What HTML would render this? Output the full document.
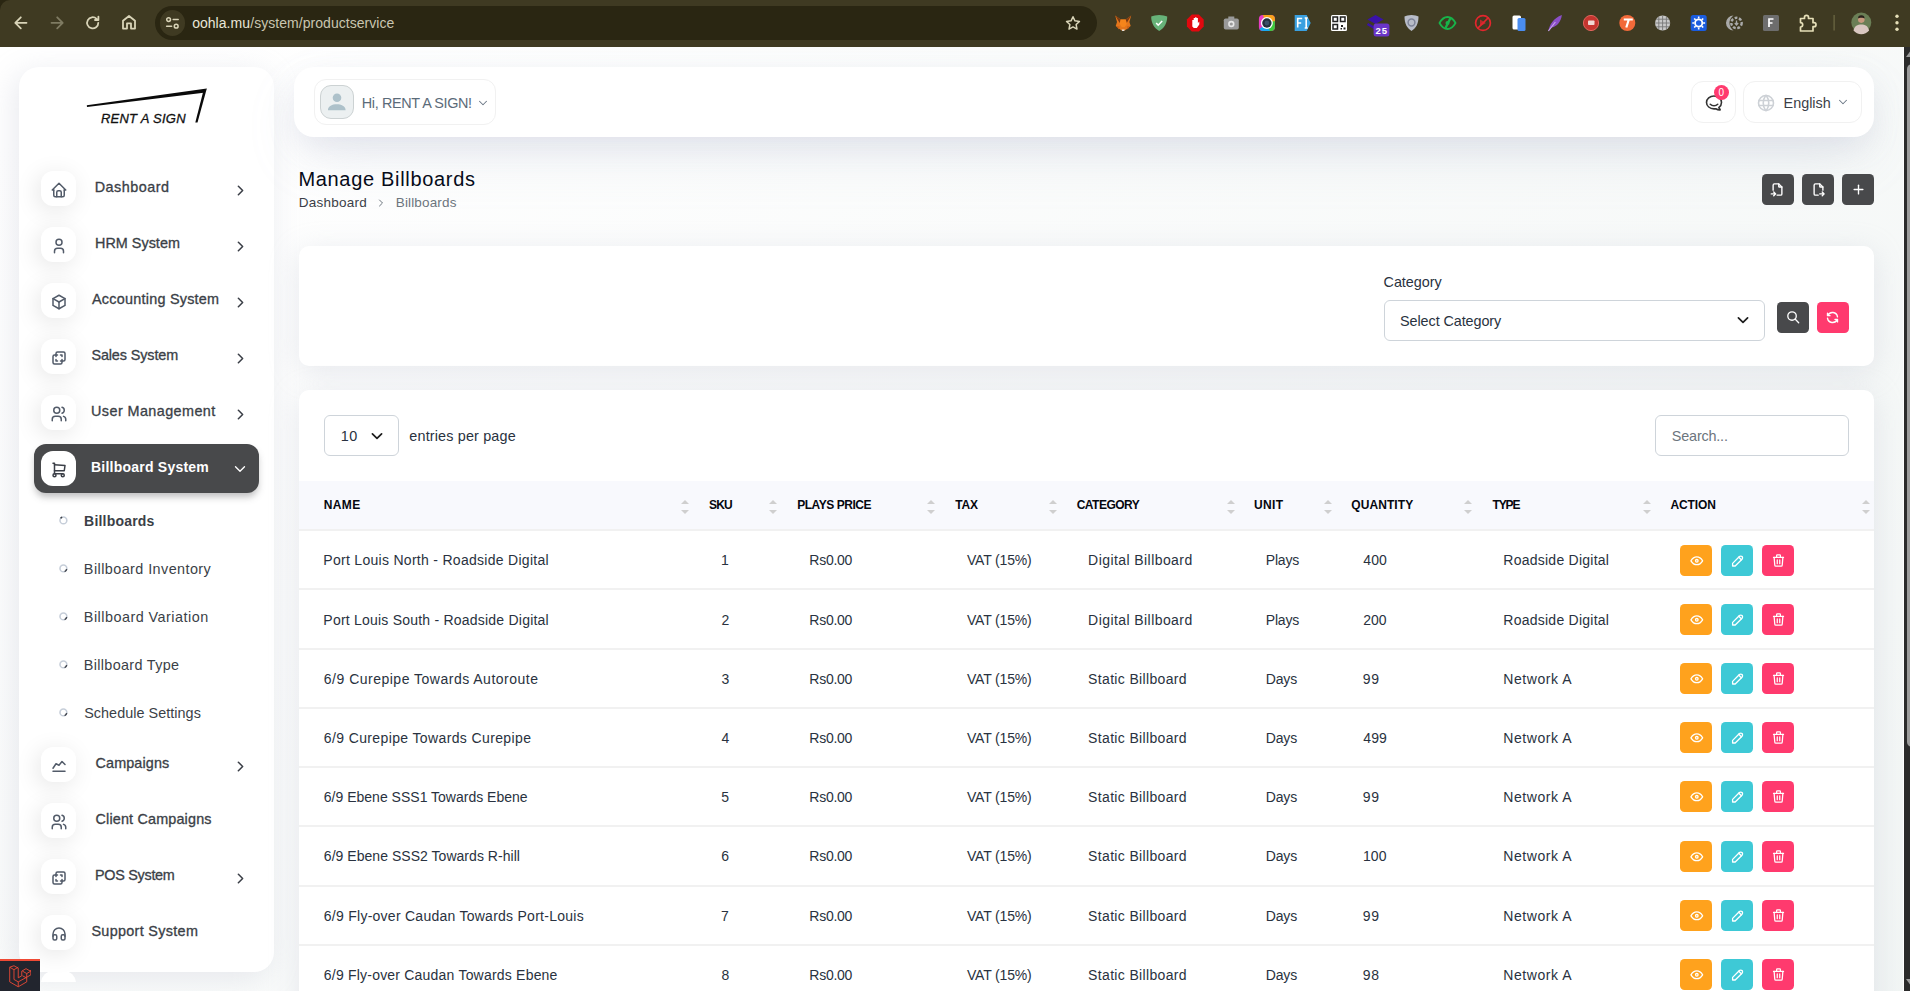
<!DOCTYPE html>
<html lang="en"><head><meta charset="utf-8"><title>Manage Billboards</title><style>
html,body{margin:0;padding:0}
body{width:1910px;height:991px;overflow:hidden;background:#fff;font-family:"Liberation Sans", sans-serif}
#root{position:relative;width:1910px;height:991px;overflow:hidden;background:linear-gradient(141.55deg, rgba(240,244,243,0) 3.46%, #f0f4f3 99.86%) 0 47px/1904px 1260px no-repeat, #fff}
.g{display:contents}
.card{position:absolute;background:#fff}
.ic{position:absolute;display:block}
.ic svg{display:block}
.t{position:absolute;white-space:pre;line-height:20px;font-family:"Liberation Sans", sans-serif}
</style></head>
<body><div id="root">
<nav class="g" aria-label="Sidebar">
<div class="card" style="left:19px;top:67px;width:254.5px;height:904.5px;border-radius:20px;box-shadow:-5px 6px 30px rgba(182,186,203,.3)"></div>
<div style="position:absolute;left:41px;top:971px;width:35px;height:11px;overflow:hidden"><div style="width:35px;height:35px;border-radius:12px;background:#fff"></div></div>
<svg class="ic" style="left:80px;top:80px" width="140" height="50" viewBox="80 80 140 50"><polygon points="86.8,105.3 206.8,88.4 203.6,92.7 87,106.9" fill="#0a0a0a"/><polygon points="206.8,88.4 197.5,122.5 195.3,122.5 203.1,92.0" fill="#0a0a0a"/></svg>
<div style="position:absolute;left:34px;top:444px;width:225px;height:49px;border-radius:12px;background:#48494b;box-shadow:0 5px 7px -1px rgba(72,73,75,.35)"></div>
<div style="position:absolute;left:41px;top:171px;width:35px;height:35px;border-radius:12px;background:#fff;box-shadow:-3px 4px 23px rgba(0,0,0,.1);"></div>
<div class="ic" style="left:49.70px;top:180.60px;width:18px;height:18px"><svg width="18" height="18" viewBox="0 0 24 24" fill="none" stroke="#525b69" stroke-width="2" stroke-linecap="round" stroke-linejoin="round" ><path d="M5 12l-2 0l9 -9l9 9l-2 0"/><path d="M5 12v7a2 2 0 0 0 2 2h10a2 2 0 0 0 2 -2v-7"/><path d="M9 21v-6a2 2 0 0 1 2 -2h2a2 2 0 0 1 2 2v6"/></svg></div>
<div class="ic" style="left:232.40px;top:181.50px;width:17px;height:17px"><svg width="17" height="17" viewBox="0 0 24 24" fill="none" stroke="#3b3f47" stroke-width="2.2" stroke-linecap="round" stroke-linejoin="round" ><path d="M9 6l6 6l-6 6"/></svg></div>
<div style="position:absolute;left:41px;top:227px;width:35px;height:35px;border-radius:12px;background:#fff;box-shadow:-3px 4px 23px rgba(0,0,0,.1);"></div>
<div class="ic" style="left:49.70px;top:236.60px;width:18px;height:18px"><svg width="18" height="18" viewBox="0 0 24 24" fill="none" stroke="#525b69" stroke-width="2" stroke-linecap="round" stroke-linejoin="round" ><path d="M8 7a4 4 0 1 0 8 0a4 4 0 0 0 -8 0"/><path d="M6 21v-2a4 4 0 0 1 4 -4h4a4 4 0 0 1 4 4v2"/></svg></div>
<div class="ic" style="left:232.40px;top:237.50px;width:17px;height:17px"><svg width="17" height="17" viewBox="0 0 24 24" fill="none" stroke="#3b3f47" stroke-width="2.2" stroke-linecap="round" stroke-linejoin="round" ><path d="M9 6l6 6l-6 6"/></svg></div>
<div style="position:absolute;left:41px;top:283px;width:35px;height:35px;border-radius:12px;background:#fff;box-shadow:-3px 4px 23px rgba(0,0,0,.1);"></div>
<div class="ic" style="left:49.70px;top:292.60px;width:18px;height:18px"><svg width="18" height="18" viewBox="0 0 24 24" fill="none" stroke="#525b69" stroke-width="2" stroke-linecap="round" stroke-linejoin="round" ><path d="M12 3l8 4.5l0 9l-8 4.5l-8 -4.5l0 -9l8 -4.5"/><path d="M12 12l8 -4.5"/><path d="M12 12l0 9"/><path d="M12 12l-8 -4.5"/></svg></div>
<div class="ic" style="left:232.40px;top:293.50px;width:17px;height:17px"><svg width="17" height="17" viewBox="0 0 24 24" fill="none" stroke="#3b3f47" stroke-width="2.2" stroke-linecap="round" stroke-linejoin="round" ><path d="M9 6l6 6l-6 6"/></svg></div>
<div style="position:absolute;left:41px;top:339px;width:35px;height:35px;border-radius:12px;background:#fff;box-shadow:-3px 4px 23px rgba(0,0,0,.1);"></div>
<div class="ic" style="left:49.70px;top:348.60px;width:18px;height:18px"><svg width="18" height="18" viewBox="0 0 24 24" fill="none" stroke="#525b69" stroke-width="2" stroke-linecap="round" stroke-linejoin="round" ><path d="M16 16v2a2 2 0 0 1 -2 2h-8a2 2 0 0 1 -2 -2v-8a2 2 0 0 1 2 -2h2v-2a2 2 0 0 1 2 -2h8a2 2 0 0 1 2 2v8a2 2 0 0 1 -2 2h-2"/><path d="M10 8l-2 0l0 2"/><path d="M8 14l0 2l2 0"/><path d="M14 8l2 0l0 2"/><path d="M16 14l0 2l-2 0"/></svg></div>
<div class="ic" style="left:232.40px;top:349.50px;width:17px;height:17px"><svg width="17" height="17" viewBox="0 0 24 24" fill="none" stroke="#3b3f47" stroke-width="2.2" stroke-linecap="round" stroke-linejoin="round" ><path d="M9 6l6 6l-6 6"/></svg></div>
<div style="position:absolute;left:41px;top:395px;width:35px;height:35px;border-radius:12px;background:#fff;box-shadow:-3px 4px 23px rgba(0,0,0,.1);"></div>
<div class="ic" style="left:49.70px;top:404.60px;width:18px;height:18px"><svg width="18" height="18" viewBox="0 0 24 24" fill="none" stroke="#525b69" stroke-width="2" stroke-linecap="round" stroke-linejoin="round" ><path d="M5 7a4 4 0 1 0 8 0a4 4 0 1 0 -8 0"/><path d="M3 21v-2a4 4 0 0 1 4 -4h4a4 4 0 0 1 4 4v2"/><path d="M16 3.13a4 4 0 0 1 0 7.75"/><path d="M21 21v-2a4 4 0 0 0 -3 -3.85"/></svg></div>
<div class="ic" style="left:232.40px;top:405.50px;width:17px;height:17px"><svg width="17" height="17" viewBox="0 0 24 24" fill="none" stroke="#3b3f47" stroke-width="2.2" stroke-linecap="round" stroke-linejoin="round" ><path d="M9 6l6 6l-6 6"/></svg></div>
<div style="position:absolute;left:41px;top:451px;width:35px;height:35px;border-radius:12px;background:#fff;"></div>
<div class="ic" style="left:49.70px;top:460.60px;width:18px;height:18px"><svg width="18" height="18" viewBox="0 0 24 24" fill="none" stroke="#3b3f47" stroke-width="2" stroke-linecap="round" stroke-linejoin="round" ><path d="M4 19a2 2 0 1 0 4 0a2 2 0 1 0 -4 0"/><path d="M15 19a2 2 0 1 0 4 0a2 2 0 1 0 -4 0"/><path d="M17 17h-11v-14h-2"/><path d="M6 5l14 1l-1 7h-13"/></svg></div>
<div style="position:absolute;left:41px;top:747px;width:35px;height:35px;border-radius:12px;background:#fff;box-shadow:-3px 4px 23px rgba(0,0,0,.1);"></div>
<div class="ic" style="left:49.70px;top:756.60px;width:18px;height:18px"><svg width="18" height="18" viewBox="0 0 24 24" fill="none" stroke="#525b69" stroke-width="2" stroke-linecap="round" stroke-linejoin="round" ><path d="M4 19l16 0"/><path d="M4 15l4 -6l4 2l4 -5l4 4"/></svg></div>
<div class="ic" style="left:232.40px;top:757.50px;width:17px;height:17px"><svg width="17" height="17" viewBox="0 0 24 24" fill="none" stroke="#3b3f47" stroke-width="2.2" stroke-linecap="round" stroke-linejoin="round" ><path d="M9 6l6 6l-6 6"/></svg></div>
<div style="position:absolute;left:41px;top:803px;width:35px;height:35px;border-radius:12px;background:#fff;box-shadow:-3px 4px 23px rgba(0,0,0,.1);"></div>
<div class="ic" style="left:49.70px;top:812.60px;width:18px;height:18px"><svg width="18" height="18" viewBox="0 0 24 24" fill="none" stroke="#525b69" stroke-width="2" stroke-linecap="round" stroke-linejoin="round" ><path d="M5 7a4 4 0 1 0 8 0a4 4 0 1 0 -8 0"/><path d="M3 21v-2a4 4 0 0 1 4 -4h4a4 4 0 0 1 4 4v2"/><path d="M16 3.13a4 4 0 0 1 0 7.75"/><path d="M21 21v-2a4 4 0 0 0 -3 -3.85"/></svg></div>
<div style="position:absolute;left:41px;top:859px;width:35px;height:35px;border-radius:12px;background:#fff;box-shadow:-3px 4px 23px rgba(0,0,0,.1);"></div>
<div class="ic" style="left:49.70px;top:868.60px;width:18px;height:18px"><svg width="18" height="18" viewBox="0 0 24 24" fill="none" stroke="#525b69" stroke-width="2" stroke-linecap="round" stroke-linejoin="round" ><path d="M16 16v2a2 2 0 0 1 -2 2h-8a2 2 0 0 1 -2 -2v-8a2 2 0 0 1 2 -2h2v-2a2 2 0 0 1 2 -2h8a2 2 0 0 1 2 2v8a2 2 0 0 1 -2 2h-2"/><path d="M10 8l-2 0l0 2"/><path d="M8 14l0 2l2 0"/><path d="M14 8l2 0l0 2"/><path d="M16 14l0 2l-2 0"/></svg></div>
<div class="ic" style="left:232.40px;top:869.50px;width:17px;height:17px"><svg width="17" height="17" viewBox="0 0 24 24" fill="none" stroke="#3b3f47" stroke-width="2.2" stroke-linecap="round" stroke-linejoin="round" ><path d="M9 6l6 6l-6 6"/></svg></div>
<div style="position:absolute;left:41px;top:915px;width:35px;height:35px;border-radius:12px;background:#fff;box-shadow:-3px 4px 23px rgba(0,0,0,.1);"></div>
<div class="ic" style="left:49.70px;top:924.60px;width:18px;height:18px"><svg width="18" height="18" viewBox="0 0 24 24" fill="none" stroke="#525b69" stroke-width="2" stroke-linecap="round" stroke-linejoin="round" ><path d="M4 15a2 2 0 0 1 2 -2h1a2 2 0 0 1 2 2v3a2 2 0 0 1 -2 2h-1a2 2 0 0 1 -2 -2z"/><path d="M15 15a2 2 0 0 1 2 -2h1a2 2 0 0 1 2 2v3a2 2 0 0 1 -2 2h-1a2 2 0 0 1 -2 -2z"/><path d="M4 15v-3a8 8 0 0 1 16 0v3"/></svg></div>
<div class="ic" style="left:230.50px;top:459.50px;width:18px;height:18px"><svg width="18" height="18" viewBox="0 0 24 24" fill="none" stroke="#ffffff" stroke-width="1.8" stroke-linecap="round" stroke-linejoin="round" ><path d="M6 9l6 6l6 -6"/></svg></div>
<svg class="ic" style="left:57.6px;top:514.8px" width="11" height="11" viewBox="0 0 11 11"><circle cx="5.4" cy="5.4" r="3.4" fill="none" stroke="#c6ced9" stroke-width="1.6"/><path d="M2.6 3.4A3.4 3.4 0 0 1 4.2 2.2" fill="none" stroke="#3b3f47" stroke-width="1.5"/></svg>
<svg class="ic" style="left:57.6px;top:563.2px" width="11" height="11" viewBox="0 0 11 11"><circle cx="5.4" cy="5.4" r="3.4" fill="none" stroke="#c6ced9" stroke-width="1.6"/><path d="M8.7 6.2A3.4 3.4 0 0 1 6.6 8.6" fill="none" stroke="#3b3f47" stroke-width="1.5"/></svg>
<svg class="ic" style="left:57.6px;top:611.2px" width="11" height="11" viewBox="0 0 11 11"><circle cx="5.4" cy="5.4" r="3.4" fill="none" stroke="#c6ced9" stroke-width="1.6"/><path d="M8.7 6.2A3.4 3.4 0 0 1 6.6 8.6" fill="none" stroke="#3b3f47" stroke-width="1.5"/></svg>
<svg class="ic" style="left:57.6px;top:659.2px" width="11" height="11" viewBox="0 0 11 11"><circle cx="5.4" cy="5.4" r="3.4" fill="none" stroke="#c6ced9" stroke-width="1.6"/><path d="M8.7 6.2A3.4 3.4 0 0 1 6.6 8.6" fill="none" stroke="#3b3f47" stroke-width="1.5"/></svg>
<svg class="ic" style="left:57.6px;top:707.2px" width="11" height="11" viewBox="0 0 11 11"><circle cx="5.4" cy="5.4" r="3.4" fill="none" stroke="#c6ced9" stroke-width="1.6"/><path d="M8.7 6.2A3.4 3.4 0 0 1 6.6 8.6" fill="none" stroke="#3b3f47" stroke-width="1.5"/></svg>
<span class="t" id="t2" style="left:100.93px;top:109.00px;font-size:13px;font-weight:400;color:#111;letter-spacing:0.250px;font-style:italic;-webkit-text-stroke:0.3px #111;">RENT A SIGN</span>
<span class="t" id="t3" style="left:94.64px;top:177.00px;font-size:14.4px;font-weight:400;color:#3b3f47;letter-spacing:0.509px;-webkit-text-stroke:0.32px #3b3f47;">Dashboard</span>
<span class="t" id="t4" style="left:95.04px;top:233.00px;font-size:14.4px;font-weight:400;color:#3b3f47;letter-spacing:0.011px;-webkit-text-stroke:0.32px #3b3f47;">HRM System</span>
<span class="t" id="t5" style="left:92.02px;top:289.00px;font-size:14.4px;font-weight:400;color:#3b3f47;letter-spacing:0.242px;-webkit-text-stroke:0.32px #3b3f47;">Accounting System</span>
<span class="t" id="t6" style="left:91.40px;top:345.00px;font-size:14.4px;font-weight:400;color:#3b3f47;letter-spacing:-0.111px;-webkit-text-stroke:0.32px #3b3f47;">Sales System</span>
<span class="t" id="t7" style="left:91.05px;top:401.00px;font-size:14.4px;font-weight:400;color:#3b3f47;letter-spacing:0.418px;-webkit-text-stroke:0.32px #3b3f47;">User Management</span>
<span class="t" id="t8" style="left:90.92px;top:457.00px;font-size:14px;font-weight:700;color:#ffffff;letter-spacing:0.236px;">Billboard System</span>
<span class="t" id="t9" style="left:84.12px;top:511.00px;font-size:14px;font-weight:700;color:#3b3f47;letter-spacing:0.196px;">Billboards</span>
<span class="t" id="t10" style="left:83.86px;top:559.00px;font-size:14.4px;font-weight:400;color:#3b3f47;letter-spacing:0.429px;">Billboard Inventory</span>
<span class="t" id="t11" style="left:83.86px;top:607.00px;font-size:14.4px;font-weight:400;color:#3b3f47;letter-spacing:0.476px;">Billboard Variation</span>
<span class="t" id="t12" style="left:83.86px;top:655.00px;font-size:14.4px;font-weight:400;color:#3b3f47;letter-spacing:0.324px;">Billboard Type</span>
<span class="t" id="t13" style="left:84.17px;top:703.00px;font-size:14.4px;font-weight:400;color:#3b3f47;letter-spacing:0.043px;">Schedule Settings</span>
<span class="t" id="t14" style="left:95.50px;top:753.00px;font-size:14.4px;font-weight:400;color:#3b3f47;letter-spacing:0.121px;-webkit-text-stroke:0.32px #3b3f47;">Campaigns</span>
<span class="t" id="t15" style="left:95.50px;top:809.00px;font-size:14.4px;font-weight:400;color:#3b3f47;letter-spacing:0.161px;-webkit-text-stroke:0.32px #3b3f47;">Client Campaigns</span>
<span class="t" id="t16" style="left:95.04px;top:865.00px;font-size:14.4px;font-weight:400;color:#3b3f47;letter-spacing:-0.287px;-webkit-text-stroke:0.32px #3b3f47;">POS System</span>
<span class="t" id="t17" style="left:91.40px;top:921.00px;font-size:14.4px;font-weight:400;color:#3b3f47;letter-spacing:0.317px;-webkit-text-stroke:0.32px #3b3f47;">Support System</span>
</nav>
<header class="g">
<div class="card" style="left:294px;top:67px;width:1580px;height:70px;border-radius:20px;box-shadow:0 10px 30px -4px rgba(165,170,195,.22),0 24px 60px -12px rgba(165,170,195,.24)"></div>
<div style="position:absolute;left:314px;top:79px;width:182px;height:46px;border:1px solid #f1f1f1;border-radius:12px;box-sizing:border-box"></div>
<div style="position:absolute;left:320px;top:85px;width:34px;height:34px;border-radius:11px;background:#ecf0f1;border:1.2px solid #ccd2d3;box-sizing:border-box;overflow:hidden"><svg width="34" height="34" viewBox="0 0 34 34" style="position:absolute;left:-1.2px;top:-1.2px"><circle cx="17" cy="12.7" r="4.3" fill="#adc1ca"/><path d="M7.9 25.3c0-4.4 4.5-6.1 8.85-6.1s8.85 1.7 8.85 6.1z" fill="#adc1ca"/></svg></div>
<div class="ic" style="left:476.20px;top:95.60px;width:14px;height:14px"><svg width="14" height="14" viewBox="0 0 24 24" fill="none" stroke="#6b7785" stroke-width="1.8" stroke-linecap="round" stroke-linejoin="round" ><path d="M6 9l6 6l6 -6"/></svg></div>
<div style="position:absolute;left:1691px;top:81px;width:45px;height:42px;border:1px solid #f1f1f1;border-radius:12px;box-sizing:border-box"></div>
<div class="ic" style="left:1703.50px;top:93.00px;width:20px;height:20px"><svg width="20" height="20" viewBox="0 0 24 24" fill="none" stroke="#333" stroke-width="1.9" stroke-linecap="round" stroke-linejoin="round" ><path d="M17.802 17.292s.077 -.055 .2 -.149c1.843 -1.425 3 -3.49 3 -5.789c0 -4.286 -4.03 -7.764 -9 -7.764c-4.97 0 -9 3.478 -9 7.764c0 4.288 4.03 7.646 9 7.646c.424 0 1.12 -.028 2.088 -.084c1.262 .82 3.104 1.493 4.716 1.493c.499 0 .734 -.41 .414 -.828c-.486 -.596 -1.156 -1.551 -1.416 -2.29z"/><path d="M7.5 13.5c2.5 2.5 6.5 2.5 9 0"/></svg></div>
<div style="position:absolute;left:1714px;top:84.8px;width:15px;height:15px;border-radius:50%;background:#ff3a6e"></div>
<div style="position:absolute;left:1743px;top:81px;width:119px;height:42px;border:1px solid #f1f1f1;border-radius:12px;box-sizing:border-box"></div>
<div class="ic" style="left:1755.50px;top:92.90px;width:20px;height:20px"><svg width="20" height="20" viewBox="0 0 24 24" fill="none" stroke="#cdd1d6" stroke-width="1.9" stroke-linecap="round" stroke-linejoin="round" ><path d="M3 12a9 9 0 1 0 18 0a9 9 0 0 0 -18 0"/><path d="M3.6 9h16.8"/><path d="M3.6 15h16.8"/><path d="M11.5 3a17 17 0 0 0 0 18"/><path d="M12.5 3a17 17 0 0 1 0 18"/></svg></div>
<div class="ic" style="left:1836.00px;top:95.20px;width:14px;height:14px"><svg width="14" height="14" viewBox="0 0 24 24" fill="none" stroke="#6b7785" stroke-width="1.8" stroke-linecap="round" stroke-linejoin="round" ><path d="M6 9l6 6l6 -6"/></svg></div>
<span class="t" id="t18" style="left:361.78px;top:93.00px;font-size:14.4px;font-weight:400;color:#5b6b79;letter-spacing:-0.359px;">Hi, RENT A SIGN!</span>
<span class="t" id="t19" style="left:1783.54px;top:93.00px;font-size:14.4px;font-weight:400;color:#3b3f47;letter-spacing:0.007px;">English</span>
<span class="t" id="t20" style="left:1718.38px;top:83.00px;font-size:10px;font-weight:400;color:#ffffff;letter-spacing:0.000px;">0</span>
</header>
<main class="g">
<div style="position:absolute;left:1762px;top:174px;width:32px;height:31px;border-radius:4.5px;background:#48494b"></div>
<div class="ic" style="left:1770.40px;top:181.50px;width:15px;height:15px"><svg width="15" height="15" viewBox="0 0 24 24" fill="none" stroke="#ffffff" stroke-width="2.2" stroke-linecap="round" stroke-linejoin="round" ><path d="M14 3v4a1 1 0 0 0 1 1h4"/><path d="M5 13v-8a2 2 0 0 1 2 -2h7l5 5v11a2 2 0 0 1 -2 2h-5.5m-9.5 -2h7m-3 -3l3 3l-3 3"/></svg></div>
<div style="position:absolute;left:1802px;top:174px;width:32px;height:31px;border-radius:4.5px;background:#48494b"></div>
<div class="ic" style="left:1810.80px;top:181.50px;width:15px;height:15px"><svg width="15" height="15" viewBox="0 0 24 24" fill="none" stroke="#ffffff" stroke-width="2.2" stroke-linecap="round" stroke-linejoin="round" ><path d="M14 3v4a1 1 0 0 0 1 1h4"/><path d="M11.5 21h-4.5a2 2 0 0 1 -2 -2v-14a2 2 0 0 1 2 -2h7l5 5v5m-5 6h7m-3 -3l3 3l-3 3"/></svg></div>
<div style="position:absolute;left:1842px;top:174px;width:32px;height:31px;border-radius:4.5px;background:#48494b"></div>
<div class="ic" style="left:1850.50px;top:181.50px;width:15px;height:15px"><svg width="15" height="15" viewBox="0 0 24 24" fill="none" stroke="#ffffff" stroke-width="2.2" stroke-linecap="round" stroke-linejoin="round" ><path d="M12 5l0 14"/><path d="M5 12l14 0"/></svg></div>
<div class="ic" style="left:374.70px;top:196.60px;width:12px;height:12px"><svg width="12" height="12" viewBox="0 0 24 24" fill="none" stroke="#6c757d" stroke-width="2" stroke-linecap="round" stroke-linejoin="round" ><path d="M9 6l6 6l-6 6"/></svg></div>
<div class="card" style="left:299px;top:246px;width:1575px;height:120px;border-radius:10px;box-shadow:0 6px 30px rgba(182,186,203,.3)"></div>
<div style="position:absolute;left:1384px;top:300px;width:381px;height:40.5px;border:1px solid #ced4da;border-radius:6px;box-sizing:border-box;background:#fff"></div>
<svg class="ic" style="left:1736px;top:314px" width="14" height="12" viewBox="0 0 14 12"><path d="M2.4 3.8l4.6 4.6l4.6 -4.6" fill="none" stroke="#1d1d1d" stroke-width="1.7" stroke-linecap="round" stroke-linejoin="round"/></svg>
<div style="position:absolute;left:1777px;top:302px;width:32px;height:31px;border-radius:4.5px;background:#48494b"></div>
<div class="ic" style="left:1785.85px;top:309.95px;width:14.5px;height:14.5px"><svg width="14.5" height="14.5" viewBox="0 0 24 24" fill="none" stroke="#ffffff" stroke-width="2.2" stroke-linecap="round" stroke-linejoin="round" ><path d="M3 10a7 7 0 1 0 14 0a7 7 0 1 0 -14 0"/><path d="M21 21l-6 -6"/></svg></div>
<div style="position:absolute;left:1817px;top:302px;width:32px;height:31px;border-radius:4.5px;background:#ff3a6e"></div>
<div class="ic" style="left:1825.30px;top:310.00px;width:15px;height:15px"><svg width="15" height="15" viewBox="0 0 24 24" fill="none" stroke="#ffffff" stroke-width="2.2" stroke-linecap="round" stroke-linejoin="round" ><path d="M20 11a8.1 8.1 0 0 0 -15.5 -2m-.5 -4v4h4"/><path d="M4 13a8.1 8.1 0 0 0 15.5 2m.5 4v-4h-4"/></svg></div>
<div class="card" style="left:299px;top:390px;width:1575px;height:700px;border-radius:10px;box-shadow:0 6px 30px rgba(182,186,203,.3)"></div>
<div style="position:absolute;left:324px;top:415px;width:75px;height:40.5px;border:1px solid #ced4da;border-radius:6px;box-sizing:border-box;background:#fff"></div>
<svg class="ic" style="left:370px;top:429.8px" width="14" height="12" viewBox="0 0 14 12"><path d="M2.4 3.8l4.6 4.6l4.6 -4.6" fill="none" stroke="#1d1d1d" stroke-width="1.7" stroke-linecap="round" stroke-linejoin="round"/></svg>
<div style="position:absolute;left:1655px;top:415px;width:194px;height:40.5px;border:1px solid #ced4da;border-radius:6px;box-sizing:border-box;background:#fff"></div>
<div style="position:absolute;left:299px;top:481px;width:1575px;height:49px;background:#f8f9fd"></div>
<svg class="ic" style="left:680.70px;top:500px" width="8" height="14" viewBox="0 0 8 14"><path d="M0 4L4 0L8 4z" fill="#cfcfcf"/><path d="M0 10L4 14L8 10z" fill="#cfcfcf"/></svg>
<svg class="ic" style="left:769.25px;top:500px" width="8" height="14" viewBox="0 0 8 14"><path d="M0 4L4 0L8 4z" fill="#cfcfcf"/><path d="M0 10L4 14L8 10z" fill="#cfcfcf"/></svg>
<svg class="ic" style="left:926.50px;top:500px" width="8" height="14" viewBox="0 0 8 14"><path d="M0 4L4 0L8 4z" fill="#cfcfcf"/><path d="M0 10L4 14L8 10z" fill="#cfcfcf"/></svg>
<svg class="ic" style="left:1048.50px;top:500px" width="8" height="14" viewBox="0 0 8 14"><path d="M0 4L4 0L8 4z" fill="#cfcfcf"/><path d="M0 10L4 14L8 10z" fill="#cfcfcf"/></svg>
<svg class="ic" style="left:1226.50px;top:500px" width="8" height="14" viewBox="0 0 8 14"><path d="M0 4L4 0L8 4z" fill="#cfcfcf"/><path d="M0 10L4 14L8 10z" fill="#cfcfcf"/></svg>
<svg class="ic" style="left:1323.50px;top:500px" width="8" height="14" viewBox="0 0 8 14"><path d="M0 4L4 0L8 4z" fill="#cfcfcf"/><path d="M0 10L4 14L8 10z" fill="#cfcfcf"/></svg>
<svg class="ic" style="left:1464.25px;top:500px" width="8" height="14" viewBox="0 0 8 14"><path d="M0 4L4 0L8 4z" fill="#cfcfcf"/><path d="M0 10L4 14L8 10z" fill="#cfcfcf"/></svg>
<svg class="ic" style="left:1642.50px;top:500px" width="8" height="14" viewBox="0 0 8 14"><path d="M0 4L4 0L8 4z" fill="#cfcfcf"/><path d="M0 10L4 14L8 10z" fill="#cfcfcf"/></svg>
<svg class="ic" style="left:1861.75px;top:500px" width="8" height="14" viewBox="0 0 8 14"><path d="M0 4L4 0L8 4z" fill="#cfcfcf"/><path d="M0 10L4 14L8 10z" fill="#cfcfcf"/></svg>
<div style="position:absolute;left:299px;top:529.00px;width:1575px;height:2px;background:#f1f1f1"></div>
<div style="position:absolute;left:299px;top:588.25px;width:1575px;height:2px;background:#f1f1f1"></div>
<div style="position:absolute;left:299px;top:647.50px;width:1575px;height:2px;background:#f1f1f1"></div>
<div style="position:absolute;left:299px;top:706.75px;width:1575px;height:2px;background:#f1f1f1"></div>
<div style="position:absolute;left:299px;top:766.00px;width:1575px;height:2px;background:#f1f1f1"></div>
<div style="position:absolute;left:299px;top:825.25px;width:1575px;height:2px;background:#f1f1f1"></div>
<div style="position:absolute;left:299px;top:884.50px;width:1575px;height:2px;background:#f1f1f1"></div>
<div style="position:absolute;left:299px;top:943.75px;width:1575px;height:2px;background:#f1f1f1"></div>
<div style="position:absolute;left:299px;top:1003.00px;width:1575px;height:2px;background:#f1f1f1"></div>
<div style="position:absolute;left:1680px;top:545px;width:32px;height:31px;border-radius:4.5px;background:#ffa21d"></div>
<div class="ic" style="left:1688.50px;top:552.70px;width:15.6px;height:15.6px"><svg width="15.6" height="15.6" viewBox="0 0 24 24" fill="none" stroke="#ffffff" stroke-width="2" stroke-linecap="round" stroke-linejoin="round" ><path d="M10 12a2 2 0 1 0 4 0a2 2 0 0 0 -4 0"/><path d="M21 12c-2.4 4 -5.4 6 -9 6c-3.6 0 -6.6 -2 -9 -6c2.4 -4 5.4 -6 9 -6c3.6 0 6.6 2 9 6"/></svg></div>
<div style="position:absolute;left:1721px;top:545px;width:32px;height:31px;border-radius:4.5px;background:#3ec9d6"></div>
<div class="ic" style="left:1729.50px;top:552.70px;width:15.6px;height:15.6px"><svg width="15.6" height="15.6" viewBox="0 0 24 24" fill="none" stroke="#ffffff" stroke-width="2" stroke-linecap="round" stroke-linejoin="round" ><path d="M4 20h4l10.5 -10.5a2.828 2.828 0 1 0 -4 -4l-10.5 10.5v4"/><path d="M13.5 6.5l4 4"/></svg></div>
<div style="position:absolute;left:1762px;top:545px;width:32px;height:31px;border-radius:4.5px;background:#ff3a6e"></div>
<div class="ic" style="left:1770.80px;top:553.00px;width:15px;height:15px"><svg width="15" height="15" viewBox="0 0 24 24" fill="none" stroke="#ffffff" stroke-width="2" stroke-linecap="round" stroke-linejoin="round" ><path d="M4 7l16 0"/><path d="M10 11l0 6"/><path d="M14 11l0 6"/><path d="M5 7l1 12a2 2 0 0 0 2 2h8a2 2 0 0 0 2 -2l1 -12"/><path d="M9 7v-3a1 1 0 0 1 1 -1h4a1 1 0 0 1 1 1v3"/></svg></div>
<div style="position:absolute;left:1680px;top:604px;width:32px;height:31px;border-radius:4.5px;background:#ffa21d"></div>
<div class="ic" style="left:1688.50px;top:611.70px;width:15.6px;height:15.6px"><svg width="15.6" height="15.6" viewBox="0 0 24 24" fill="none" stroke="#ffffff" stroke-width="2" stroke-linecap="round" stroke-linejoin="round" ><path d="M10 12a2 2 0 1 0 4 0a2 2 0 0 0 -4 0"/><path d="M21 12c-2.4 4 -5.4 6 -9 6c-3.6 0 -6.6 -2 -9 -6c2.4 -4 5.4 -6 9 -6c3.6 0 6.6 2 9 6"/></svg></div>
<div style="position:absolute;left:1721px;top:604px;width:32px;height:31px;border-radius:4.5px;background:#3ec9d6"></div>
<div class="ic" style="left:1729.50px;top:611.70px;width:15.6px;height:15.6px"><svg width="15.6" height="15.6" viewBox="0 0 24 24" fill="none" stroke="#ffffff" stroke-width="2" stroke-linecap="round" stroke-linejoin="round" ><path d="M4 20h4l10.5 -10.5a2.828 2.828 0 1 0 -4 -4l-10.5 10.5v4"/><path d="M13.5 6.5l4 4"/></svg></div>
<div style="position:absolute;left:1762px;top:604px;width:32px;height:31px;border-radius:4.5px;background:#ff3a6e"></div>
<div class="ic" style="left:1770.80px;top:612.00px;width:15px;height:15px"><svg width="15" height="15" viewBox="0 0 24 24" fill="none" stroke="#ffffff" stroke-width="2" stroke-linecap="round" stroke-linejoin="round" ><path d="M4 7l16 0"/><path d="M10 11l0 6"/><path d="M14 11l0 6"/><path d="M5 7l1 12a2 2 0 0 0 2 2h8a2 2 0 0 0 2 -2l1 -12"/><path d="M9 7v-3a1 1 0 0 1 1 -1h4a1 1 0 0 1 1 1v3"/></svg></div>
<div style="position:absolute;left:1680px;top:663px;width:32px;height:31px;border-radius:4.5px;background:#ffa21d"></div>
<div class="ic" style="left:1688.50px;top:670.70px;width:15.6px;height:15.6px"><svg width="15.6" height="15.6" viewBox="0 0 24 24" fill="none" stroke="#ffffff" stroke-width="2" stroke-linecap="round" stroke-linejoin="round" ><path d="M10 12a2 2 0 1 0 4 0a2 2 0 0 0 -4 0"/><path d="M21 12c-2.4 4 -5.4 6 -9 6c-3.6 0 -6.6 -2 -9 -6c2.4 -4 5.4 -6 9 -6c3.6 0 6.6 2 9 6"/></svg></div>
<div style="position:absolute;left:1721px;top:663px;width:32px;height:31px;border-radius:4.5px;background:#3ec9d6"></div>
<div class="ic" style="left:1729.50px;top:670.70px;width:15.6px;height:15.6px"><svg width="15.6" height="15.6" viewBox="0 0 24 24" fill="none" stroke="#ffffff" stroke-width="2" stroke-linecap="round" stroke-linejoin="round" ><path d="M4 20h4l10.5 -10.5a2.828 2.828 0 1 0 -4 -4l-10.5 10.5v4"/><path d="M13.5 6.5l4 4"/></svg></div>
<div style="position:absolute;left:1762px;top:663px;width:32px;height:31px;border-radius:4.5px;background:#ff3a6e"></div>
<div class="ic" style="left:1770.80px;top:671.00px;width:15px;height:15px"><svg width="15" height="15" viewBox="0 0 24 24" fill="none" stroke="#ffffff" stroke-width="2" stroke-linecap="round" stroke-linejoin="round" ><path d="M4 7l16 0"/><path d="M10 11l0 6"/><path d="M14 11l0 6"/><path d="M5 7l1 12a2 2 0 0 0 2 2h8a2 2 0 0 0 2 -2l1 -12"/><path d="M9 7v-3a1 1 0 0 1 1 -1h4a1 1 0 0 1 1 1v3"/></svg></div>
<div style="position:absolute;left:1680px;top:722px;width:32px;height:31px;border-radius:4.5px;background:#ffa21d"></div>
<div class="ic" style="left:1688.50px;top:729.70px;width:15.6px;height:15.6px"><svg width="15.6" height="15.6" viewBox="0 0 24 24" fill="none" stroke="#ffffff" stroke-width="2" stroke-linecap="round" stroke-linejoin="round" ><path d="M10 12a2 2 0 1 0 4 0a2 2 0 0 0 -4 0"/><path d="M21 12c-2.4 4 -5.4 6 -9 6c-3.6 0 -6.6 -2 -9 -6c2.4 -4 5.4 -6 9 -6c3.6 0 6.6 2 9 6"/></svg></div>
<div style="position:absolute;left:1721px;top:722px;width:32px;height:31px;border-radius:4.5px;background:#3ec9d6"></div>
<div class="ic" style="left:1729.50px;top:729.70px;width:15.6px;height:15.6px"><svg width="15.6" height="15.6" viewBox="0 0 24 24" fill="none" stroke="#ffffff" stroke-width="2" stroke-linecap="round" stroke-linejoin="round" ><path d="M4 20h4l10.5 -10.5a2.828 2.828 0 1 0 -4 -4l-10.5 10.5v4"/><path d="M13.5 6.5l4 4"/></svg></div>
<div style="position:absolute;left:1762px;top:722px;width:32px;height:31px;border-radius:4.5px;background:#ff3a6e"></div>
<div class="ic" style="left:1770.80px;top:730.00px;width:15px;height:15px"><svg width="15" height="15" viewBox="0 0 24 24" fill="none" stroke="#ffffff" stroke-width="2" stroke-linecap="round" stroke-linejoin="round" ><path d="M4 7l16 0"/><path d="M10 11l0 6"/><path d="M14 11l0 6"/><path d="M5 7l1 12a2 2 0 0 0 2 2h8a2 2 0 0 0 2 -2l1 -12"/><path d="M9 7v-3a1 1 0 0 1 1 -1h4a1 1 0 0 1 1 1v3"/></svg></div>
<div style="position:absolute;left:1680px;top:781px;width:32px;height:31px;border-radius:4.5px;background:#ffa21d"></div>
<div class="ic" style="left:1688.50px;top:788.70px;width:15.6px;height:15.6px"><svg width="15.6" height="15.6" viewBox="0 0 24 24" fill="none" stroke="#ffffff" stroke-width="2" stroke-linecap="round" stroke-linejoin="round" ><path d="M10 12a2 2 0 1 0 4 0a2 2 0 0 0 -4 0"/><path d="M21 12c-2.4 4 -5.4 6 -9 6c-3.6 0 -6.6 -2 -9 -6c2.4 -4 5.4 -6 9 -6c3.6 0 6.6 2 9 6"/></svg></div>
<div style="position:absolute;left:1721px;top:781px;width:32px;height:31px;border-radius:4.5px;background:#3ec9d6"></div>
<div class="ic" style="left:1729.50px;top:788.70px;width:15.6px;height:15.6px"><svg width="15.6" height="15.6" viewBox="0 0 24 24" fill="none" stroke="#ffffff" stroke-width="2" stroke-linecap="round" stroke-linejoin="round" ><path d="M4 20h4l10.5 -10.5a2.828 2.828 0 1 0 -4 -4l-10.5 10.5v4"/><path d="M13.5 6.5l4 4"/></svg></div>
<div style="position:absolute;left:1762px;top:781px;width:32px;height:31px;border-radius:4.5px;background:#ff3a6e"></div>
<div class="ic" style="left:1770.80px;top:789.00px;width:15px;height:15px"><svg width="15" height="15" viewBox="0 0 24 24" fill="none" stroke="#ffffff" stroke-width="2" stroke-linecap="round" stroke-linejoin="round" ><path d="M4 7l16 0"/><path d="M10 11l0 6"/><path d="M14 11l0 6"/><path d="M5 7l1 12a2 2 0 0 0 2 2h8a2 2 0 0 0 2 -2l1 -12"/><path d="M9 7v-3a1 1 0 0 1 1 -1h4a1 1 0 0 1 1 1v3"/></svg></div>
<div style="position:absolute;left:1680px;top:841px;width:32px;height:31px;border-radius:4.5px;background:#ffa21d"></div>
<div class="ic" style="left:1688.50px;top:848.70px;width:15.6px;height:15.6px"><svg width="15.6" height="15.6" viewBox="0 0 24 24" fill="none" stroke="#ffffff" stroke-width="2" stroke-linecap="round" stroke-linejoin="round" ><path d="M10 12a2 2 0 1 0 4 0a2 2 0 0 0 -4 0"/><path d="M21 12c-2.4 4 -5.4 6 -9 6c-3.6 0 -6.6 -2 -9 -6c2.4 -4 5.4 -6 9 -6c3.6 0 6.6 2 9 6"/></svg></div>
<div style="position:absolute;left:1721px;top:841px;width:32px;height:31px;border-radius:4.5px;background:#3ec9d6"></div>
<div class="ic" style="left:1729.50px;top:848.70px;width:15.6px;height:15.6px"><svg width="15.6" height="15.6" viewBox="0 0 24 24" fill="none" stroke="#ffffff" stroke-width="2" stroke-linecap="round" stroke-linejoin="round" ><path d="M4 20h4l10.5 -10.5a2.828 2.828 0 1 0 -4 -4l-10.5 10.5v4"/><path d="M13.5 6.5l4 4"/></svg></div>
<div style="position:absolute;left:1762px;top:841px;width:32px;height:31px;border-radius:4.5px;background:#ff3a6e"></div>
<div class="ic" style="left:1770.80px;top:849.00px;width:15px;height:15px"><svg width="15" height="15" viewBox="0 0 24 24" fill="none" stroke="#ffffff" stroke-width="2" stroke-linecap="round" stroke-linejoin="round" ><path d="M4 7l16 0"/><path d="M10 11l0 6"/><path d="M14 11l0 6"/><path d="M5 7l1 12a2 2 0 0 0 2 2h8a2 2 0 0 0 2 -2l1 -12"/><path d="M9 7v-3a1 1 0 0 1 1 -1h4a1 1 0 0 1 1 1v3"/></svg></div>
<div style="position:absolute;left:1680px;top:900px;width:32px;height:31px;border-radius:4.5px;background:#ffa21d"></div>
<div class="ic" style="left:1688.50px;top:907.70px;width:15.6px;height:15.6px"><svg width="15.6" height="15.6" viewBox="0 0 24 24" fill="none" stroke="#ffffff" stroke-width="2" stroke-linecap="round" stroke-linejoin="round" ><path d="M10 12a2 2 0 1 0 4 0a2 2 0 0 0 -4 0"/><path d="M21 12c-2.4 4 -5.4 6 -9 6c-3.6 0 -6.6 -2 -9 -6c2.4 -4 5.4 -6 9 -6c3.6 0 6.6 2 9 6"/></svg></div>
<div style="position:absolute;left:1721px;top:900px;width:32px;height:31px;border-radius:4.5px;background:#3ec9d6"></div>
<div class="ic" style="left:1729.50px;top:907.70px;width:15.6px;height:15.6px"><svg width="15.6" height="15.6" viewBox="0 0 24 24" fill="none" stroke="#ffffff" stroke-width="2" stroke-linecap="round" stroke-linejoin="round" ><path d="M4 20h4l10.5 -10.5a2.828 2.828 0 1 0 -4 -4l-10.5 10.5v4"/><path d="M13.5 6.5l4 4"/></svg></div>
<div style="position:absolute;left:1762px;top:900px;width:32px;height:31px;border-radius:4.5px;background:#ff3a6e"></div>
<div class="ic" style="left:1770.80px;top:908.00px;width:15px;height:15px"><svg width="15" height="15" viewBox="0 0 24 24" fill="none" stroke="#ffffff" stroke-width="2" stroke-linecap="round" stroke-linejoin="round" ><path d="M4 7l16 0"/><path d="M10 11l0 6"/><path d="M14 11l0 6"/><path d="M5 7l1 12a2 2 0 0 0 2 2h8a2 2 0 0 0 2 -2l1 -12"/><path d="M9 7v-3a1 1 0 0 1 1 -1h4a1 1 0 0 1 1 1v3"/></svg></div>
<div style="position:absolute;left:1680px;top:959px;width:32px;height:31px;border-radius:4.5px;background:#ffa21d"></div>
<div class="ic" style="left:1688.50px;top:966.70px;width:15.6px;height:15.6px"><svg width="15.6" height="15.6" viewBox="0 0 24 24" fill="none" stroke="#ffffff" stroke-width="2" stroke-linecap="round" stroke-linejoin="round" ><path d="M10 12a2 2 0 1 0 4 0a2 2 0 0 0 -4 0"/><path d="M21 12c-2.4 4 -5.4 6 -9 6c-3.6 0 -6.6 -2 -9 -6c2.4 -4 5.4 -6 9 -6c3.6 0 6.6 2 9 6"/></svg></div>
<div style="position:absolute;left:1721px;top:959px;width:32px;height:31px;border-radius:4.5px;background:#3ec9d6"></div>
<div class="ic" style="left:1729.50px;top:966.70px;width:15.6px;height:15.6px"><svg width="15.6" height="15.6" viewBox="0 0 24 24" fill="none" stroke="#ffffff" stroke-width="2" stroke-linecap="round" stroke-linejoin="round" ><path d="M4 20h4l10.5 -10.5a2.828 2.828 0 1 0 -4 -4l-10.5 10.5v4"/><path d="M13.5 6.5l4 4"/></svg></div>
<div style="position:absolute;left:1762px;top:959px;width:32px;height:31px;border-radius:4.5px;background:#ff3a6e"></div>
<div class="ic" style="left:1770.80px;top:967.00px;width:15px;height:15px"><svg width="15" height="15" viewBox="0 0 24 24" fill="none" stroke="#ffffff" stroke-width="2" stroke-linecap="round" stroke-linejoin="round" ><path d="M4 7l16 0"/><path d="M10 11l0 6"/><path d="M14 11l0 6"/><path d="M5 7l1 12a2 2 0 0 0 2 2h8a2 2 0 0 0 2 -2l1 -12"/><path d="M9 7v-3a1 1 0 0 1 1 -1h4a1 1 0 0 1 1 1v3"/></svg></div>
<span class="t" id="t21" style="left:298.43px;top:169.00px;font-size:20px;font-weight:400;color:#060b19;letter-spacing:0.682px;">Manage Billboards</span>
<span class="t" id="t22" style="left:298.72px;top:193.00px;font-size:13.5px;font-weight:400;color:#3b3f47;letter-spacing:0.236px;">Dashboard</span>
<span class="t" id="t23" style="left:395.72px;top:193.00px;font-size:13.5px;font-weight:400;color:#6c757d;letter-spacing:0.160px;">Billboards</span>
<span class="t" id="t24" style="left:1383.52px;top:272.00px;font-size:14.4px;font-weight:400;color:#293240;letter-spacing:-0.022px;">Category</span>
<span class="t" id="t25" style="left:1400.06px;top:311.00px;font-size:14.4px;font-weight:400;color:#293240;letter-spacing:-0.083px;">Select Category</span>
<span class="t" id="t26" style="left:340.73px;top:426.00px;font-size:14.4px;font-weight:400;color:#293240;letter-spacing:0.510px;">10</span>
<span class="t" id="t27" style="left:409.34px;top:426.00px;font-size:14.4px;font-weight:400;color:#293240;letter-spacing:0.157px;">entries per page</span>
<span class="t" id="t28" style="left:1671.87px;top:426.00px;font-size:14.4px;font-weight:400;color:#6c757d;letter-spacing:-0.196px;">Search...</span>
<span class="t" id="t29" style="left:323.82px;top:495.00px;font-size:12px;font-weight:700;color:#05070f;letter-spacing:0.337px;">NAME</span>
<span class="t" id="t30" style="left:709.04px;top:495.00px;font-size:12px;font-weight:700;color:#05070f;letter-spacing:-0.789px;">SKU</span>
<span class="t" id="t31" style="left:797.16px;top:495.00px;font-size:12px;font-weight:700;color:#05070f;letter-spacing:-0.457px;">PLAYS PRICE</span>
<span class="t" id="t32" style="left:955.24px;top:495.00px;font-size:12px;font-weight:700;color:#05070f;letter-spacing:-0.152px;">TAX</span>
<span class="t" id="t33" style="left:1076.70px;top:495.00px;font-size:12px;font-weight:700;color:#05070f;letter-spacing:-0.509px;">CATEGORY</span>
<span class="t" id="t34" style="left:1253.90px;top:495.00px;font-size:12px;font-weight:700;color:#05070f;letter-spacing:0.425px;">UNIT</span>
<span class="t" id="t35" style="left:1351.37px;top:495.00px;font-size:12px;font-weight:700;color:#05070f;letter-spacing:0.069px;">QUANTITY</span>
<span class="t" id="t36" style="left:1492.47px;top:495.00px;font-size:12px;font-weight:700;color:#05070f;letter-spacing:-1.115px;">TYPE</span>
<span class="t" id="t37" style="left:1670.41px;top:495.00px;font-size:12px;font-weight:700;color:#05070f;letter-spacing:-0.110px;">ACTION</span>
<span class="t" id="t38" style="left:323.33px;top:550.00px;font-size:14px;font-weight:400;color:#293240;letter-spacing:0.289px;">Port Louis North - Roadside Digital</span>
<span class="t" id="t39" style="left:721.05px;top:550.00px;font-size:14px;font-weight:400;color:#293240;letter-spacing:0.000px;">1</span>
<span class="t" id="t40" style="left:809.33px;top:550.00px;font-size:14px;font-weight:400;color:#293240;letter-spacing:-0.271px;">Rs0.00</span>
<span class="t" id="t41" style="left:967.00px;top:550.00px;font-size:14px;font-weight:400;color:#293240;letter-spacing:-0.181px;">VAT (15%)</span>
<span class="t" id="t42" style="left:1088.12px;top:550.00px;font-size:14px;font-weight:400;color:#293240;letter-spacing:0.427px;">Digital Billboard</span>
<span class="t" id="t43" style="left:1265.79px;top:550.00px;font-size:14px;font-weight:400;color:#293240;letter-spacing:-0.186px;">Plays</span>
<span class="t" id="t44" style="left:1363.34px;top:550.00px;font-size:14px;font-weight:400;color:#293240;letter-spacing:0.031px;">400</span>
<span class="t" id="t45" style="left:1503.33px;top:550.00px;font-size:14px;font-weight:400;color:#293240;letter-spacing:0.244px;">Roadside Digital</span>
<span class="t" id="t46" style="left:323.33px;top:610.00px;font-size:14px;font-weight:400;color:#293240;letter-spacing:0.220px;">Port Louis South - Roadside Digital</span>
<span class="t" id="t47" style="left:721.40px;top:610.00px;font-size:14px;font-weight:400;color:#293240;letter-spacing:0.000px;">2</span>
<span class="t" id="t48" style="left:809.33px;top:610.00px;font-size:14px;font-weight:400;color:#293240;letter-spacing:-0.271px;">Rs0.00</span>
<span class="t" id="t49" style="left:967.00px;top:610.00px;font-size:14px;font-weight:400;color:#293240;letter-spacing:-0.181px;">VAT (15%)</span>
<span class="t" id="t50" style="left:1088.12px;top:610.00px;font-size:14px;font-weight:400;color:#293240;letter-spacing:0.427px;">Digital Billboard</span>
<span class="t" id="t51" style="left:1265.79px;top:610.00px;font-size:14px;font-weight:400;color:#293240;letter-spacing:-0.186px;">Plays</span>
<span class="t" id="t52" style="left:1363.23px;top:610.00px;font-size:14px;font-weight:400;color:#293240;letter-spacing:-0.019px;">200</span>
<span class="t" id="t53" style="left:1503.33px;top:610.00px;font-size:14px;font-weight:400;color:#293240;letter-spacing:0.244px;">Roadside Digital</span>
<span class="t" id="t54" style="left:323.83px;top:669.00px;font-size:14px;font-weight:400;color:#293240;letter-spacing:0.495px;">6/9 Curepipe Towards Autoroute</span>
<span class="t" id="t55" style="left:721.47px;top:669.00px;font-size:14px;font-weight:400;color:#293240;letter-spacing:0.000px;">3</span>
<span class="t" id="t56" style="left:809.33px;top:669.00px;font-size:14px;font-weight:400;color:#293240;letter-spacing:-0.271px;">Rs0.00</span>
<span class="t" id="t57" style="left:967.00px;top:669.00px;font-size:14px;font-weight:400;color:#293240;letter-spacing:-0.181px;">VAT (15%)</span>
<span class="t" id="t58" style="left:1088.10px;top:669.00px;font-size:14px;font-weight:400;color:#293240;letter-spacing:0.342px;">Static Billboard</span>
<span class="t" id="t59" style="left:1265.79px;top:669.00px;font-size:14px;font-weight:400;color:#293240;letter-spacing:-0.174px;">Days</span>
<span class="t" id="t60" style="left:1362.74px;top:669.00px;font-size:14px;font-weight:400;color:#293240;letter-spacing:0.636px;">99</span>
<span class="t" id="t61" style="left:1503.33px;top:669.00px;font-size:14px;font-weight:400;color:#293240;letter-spacing:0.572px;">Network A</span>
<span class="t" id="t62" style="left:323.83px;top:728.00px;font-size:14px;font-weight:400;color:#293240;letter-spacing:0.374px;">6/9 Curepipe Towards Curepipe</span>
<span class="t" id="t63" style="left:721.50px;top:728.00px;font-size:14px;font-weight:400;color:#293240;letter-spacing:0.000px;">4</span>
<span class="t" id="t64" style="left:809.33px;top:728.00px;font-size:14px;font-weight:400;color:#293240;letter-spacing:-0.271px;">Rs0.00</span>
<span class="t" id="t65" style="left:967.00px;top:728.00px;font-size:14px;font-weight:400;color:#293240;letter-spacing:-0.181px;">VAT (15%)</span>
<span class="t" id="t66" style="left:1088.10px;top:728.00px;font-size:14px;font-weight:400;color:#293240;letter-spacing:0.342px;">Static Billboard</span>
<span class="t" id="t67" style="left:1265.79px;top:728.00px;font-size:14px;font-weight:400;color:#293240;letter-spacing:-0.174px;">Days</span>
<span class="t" id="t68" style="left:1363.34px;top:728.00px;font-size:14px;font-weight:400;color:#293240;letter-spacing:0.086px;">499</span>
<span class="t" id="t69" style="left:1503.33px;top:728.00px;font-size:14px;font-weight:400;color:#293240;letter-spacing:0.572px;">Network A</span>
<span class="t" id="t70" style="left:323.83px;top:787.00px;font-size:14px;font-weight:400;color:#293240;letter-spacing:0.005px;">6/9 Ebene SSS1 Towards Ebene</span>
<span class="t" id="t71" style="left:721.28px;top:787.00px;font-size:14px;font-weight:400;color:#293240;letter-spacing:0.000px;">5</span>
<span class="t" id="t72" style="left:809.33px;top:787.00px;font-size:14px;font-weight:400;color:#293240;letter-spacing:-0.271px;">Rs0.00</span>
<span class="t" id="t73" style="left:967.00px;top:787.00px;font-size:14px;font-weight:400;color:#293240;letter-spacing:-0.181px;">VAT (15%)</span>
<span class="t" id="t74" style="left:1088.10px;top:787.00px;font-size:14px;font-weight:400;color:#293240;letter-spacing:0.342px;">Static Billboard</span>
<span class="t" id="t75" style="left:1265.79px;top:787.00px;font-size:14px;font-weight:400;color:#293240;letter-spacing:-0.174px;">Days</span>
<span class="t" id="t76" style="left:1362.74px;top:787.00px;font-size:14px;font-weight:400;color:#293240;letter-spacing:0.636px;">99</span>
<span class="t" id="t77" style="left:1503.33px;top:787.00px;font-size:14px;font-weight:400;color:#293240;letter-spacing:0.572px;">Network A</span>
<span class="t" id="t78" style="left:323.83px;top:846.00px;font-size:14px;font-weight:400;color:#293240;letter-spacing:0.036px;">6/9 Ebene SSS2 Towards R-hill</span>
<span class="t" id="t79" style="left:721.30px;top:846.00px;font-size:14px;font-weight:400;color:#293240;letter-spacing:0.000px;">6</span>
<span class="t" id="t80" style="left:809.33px;top:846.00px;font-size:14px;font-weight:400;color:#293240;letter-spacing:-0.271px;">Rs0.00</span>
<span class="t" id="t81" style="left:967.00px;top:846.00px;font-size:14px;font-weight:400;color:#293240;letter-spacing:-0.181px;">VAT (15%)</span>
<span class="t" id="t82" style="left:1088.10px;top:846.00px;font-size:14px;font-weight:400;color:#293240;letter-spacing:0.342px;">Static Billboard</span>
<span class="t" id="t83" style="left:1265.79px;top:846.00px;font-size:14px;font-weight:400;color:#293240;letter-spacing:-0.174px;">Days</span>
<span class="t" id="t84" style="left:1362.90px;top:846.00px;font-size:14px;font-weight:400;color:#293240;letter-spacing:0.102px;">100</span>
<span class="t" id="t85" style="left:1503.33px;top:846.00px;font-size:14px;font-weight:400;color:#293240;letter-spacing:0.572px;">Network A</span>
<span class="t" id="t86" style="left:323.83px;top:906.00px;font-size:14px;font-weight:400;color:#293240;letter-spacing:0.257px;">6/9 Fly-over Caudan Towards Port-Louis</span>
<span class="t" id="t87" style="left:721.01px;top:906.00px;font-size:14px;font-weight:400;color:#293240;letter-spacing:0.000px;">7</span>
<span class="t" id="t88" style="left:809.33px;top:906.00px;font-size:14px;font-weight:400;color:#293240;letter-spacing:-0.271px;">Rs0.00</span>
<span class="t" id="t89" style="left:967.00px;top:906.00px;font-size:14px;font-weight:400;color:#293240;letter-spacing:-0.181px;">VAT (15%)</span>
<span class="t" id="t90" style="left:1088.10px;top:906.00px;font-size:14px;font-weight:400;color:#293240;letter-spacing:0.342px;">Static Billboard</span>
<span class="t" id="t91" style="left:1265.79px;top:906.00px;font-size:14px;font-weight:400;color:#293240;letter-spacing:-0.174px;">Days</span>
<span class="t" id="t92" style="left:1362.74px;top:906.00px;font-size:14px;font-weight:400;color:#293240;letter-spacing:0.636px;">99</span>
<span class="t" id="t93" style="left:1503.33px;top:906.00px;font-size:14px;font-weight:400;color:#293240;letter-spacing:0.572px;">Network A</span>
<span class="t" id="t94" style="left:323.83px;top:965.00px;font-size:14px;font-weight:400;color:#293240;letter-spacing:0.206px;">6/9 Fly-over Caudan Towards Ebene</span>
<span class="t" id="t95" style="left:721.39px;top:965.00px;font-size:14px;font-weight:400;color:#293240;letter-spacing:0.000px;">8</span>
<span class="t" id="t96" style="left:809.33px;top:965.00px;font-size:14px;font-weight:400;color:#293240;letter-spacing:-0.271px;">Rs0.00</span>
<span class="t" id="t97" style="left:967.00px;top:965.00px;font-size:14px;font-weight:400;color:#293240;letter-spacing:-0.181px;">VAT (15%)</span>
<span class="t" id="t98" style="left:1088.10px;top:965.00px;font-size:14px;font-weight:400;color:#293240;letter-spacing:0.342px;">Static Billboard</span>
<span class="t" id="t99" style="left:1265.79px;top:965.00px;font-size:14px;font-weight:400;color:#293240;letter-spacing:-0.174px;">Days</span>
<span class="t" id="t100" style="left:1362.74px;top:965.00px;font-size:14px;font-weight:400;color:#293240;letter-spacing:0.638px;">98</span>
<span class="t" id="t101" style="left:1503.33px;top:965.00px;font-size:14px;font-weight:400;color:#293240;letter-spacing:0.572px;">Network A</span>
</main>
<div class="g">
<div style="position:absolute;left:0;top:959px;width:40px;height:32px;background:#22252e;border-top:2px solid #ef4a35;box-sizing:border-box"></div>
<svg class="ic" style="left:9px;top:965px" width="22" height="23" viewBox="0 0 50 52" fill="none" stroke="#ef4a35" stroke-width="2" stroke-linejoin="round"><path d="M49.6 11.6v10.7L40.3 27.6v10.6L21 49.3 1.6 38.2V4.9L11.3 1.5 21 7v22l8-4.6V13.8l9.7-5.6 9.7 5.6zM1.6 4.9l9.7 5.6 9.7-5.6M11.3 10.5v22.2l9.7 5.5 19.3-10.6M21 38.2v11M30.6 13.8l9.7 5.5 9.3-5.5M40.3 19.3v8.3M30.6 24.4l9.7 5"/></svg>
<div style="position:absolute;left:1903px;top:47px;width:1px;height:944px;background:#fff"></div>
<div style="position:absolute;left:1904px;top:47px;width:6px;height:944px;background:#2b2b2b"></div>
<div style="position:absolute;left:1907px;top:64px;width:10px;height:683px;border-radius:5px;background:#9c9c9c"></div>
<svg class="ic" style="left:1906px;top:50px" width="4" height="8" viewBox="0 0 4 8"><path d="M0 7L4 1.5V7z" fill="#9c9c9c"/></svg>
<svg class="ic" style="left:1906px;top:978px" width="4" height="8" viewBox="0 0 4 8"><path d="M0 1L4 1V6.5z" fill="#9c9c9c"/></svg>
</div>
<div class="g" aria-label="Browser toolbar">
<div style="position:absolute;left:0;top:0;width:30px;height:20px;background:#2a2612"></div>
<div style="position:absolute;left:0;top:0;width:1910px;height:46.6px;background:#3f3a22;border-top-left-radius:10px"></div>
<div style="position:absolute;left:155px;top:5.5px;width:942px;height:34.5px;border-radius:17.25px;background:#2a2612"></div>
<div style="position:absolute;left:159.5px;top:10px;width:25.5px;height:25.5px;border-radius:50%;background:#3f3a22"></div>
<svg class="ic" style="left:0;top:0" width="150" height="47" viewBox="0 0 150 47" fill="none" stroke-linecap="round" stroke-linejoin="round"><g stroke="#d9d4b8" stroke-width="1.8"><path d="M26.5 22.8H15.5M20.8 17.3l-5.5 5.5l5.5 5.5"/></g><g stroke="#7f7b62" stroke-width="1.8"><path d="M51.5 22.8H62.5M57.2 17.3l5.5 5.5l-5.5 5.5"/></g><g stroke="#d9d4b8" stroke-width="1.8"><path d="M98.3 22.8a5.6 5.6 0 1 1 -1.7 -4M98.4 16.6v3.4h-3.4" /><path d="M123 28.6v-7.8l6 -4.8l6 4.8v7.8h-4v-5.2h-4v5.2z"/></g></svg>
<svg class="ic" style="left:164px;top:15px" width="17" height="16" viewBox="0 0 17 16" fill="none" stroke="#d9d4b8" stroke-width="1.5" stroke-linecap="round"><circle cx="4.6" cy="4.6" r="1.9"/><path d="M9.2 4.6h5"/><circle cx="12.2" cy="11.2" r="1.9"/><path d="M2.6 11.2h5"/></svg>
<svg class="ic" style="left:1064px;top:14px" width="18" height="18" viewBox="0 0 24 24" fill="none" stroke="#d9d4b8" stroke-width="2" stroke-linejoin="round"><path d="M12 3.6l2.6 5.5l6 .8l-4.4 4.2l1.1 6l-5.3 -2.9l-5.3 2.9l1.1 -6l-4.4 -4.2l6 -.8z"/></svg>
<svg class="ic" style="left:0;top:0" width="1910" height="47" viewBox="0 0 1910 47"><g transform="translate(1123.2,23)"><path d="M-8 -7.500l5.500 4h5l5.500 -4l-1.800 6.500l1.300 4l-4.500 3.500l-1.500 1h-3l-1.500 -1l-4.500 -3.500l1.300 -4z" fill="#e4761b"/><path d="M-8 -7.500l5.500 4l-1 3.500zM8 -7.500l-5.500 4l1 3.500z" fill="#7a3a12"/><path d="M-2.500 -3.500h5l1 4.500l-2 3h-3l-2 -3z" fill="#f6851b"/><path d="M-1.500 6.500h3l-.500 1.500h-2z" fill="#e8e2da"/><path d="M-6.700 3l3.200 .5l-1 3zM6.700 3l-3.200 .5l1 3z" fill="#cd6116"/></g><g transform="translate(1159.2,23)"><path d="M0 -8c3 0 6 .8 8 1.6c0 7 -3 11.5 -8 14.4c-5 -2.900 -8 -7.400 -8 -14.400c2 -.8 5 -1.600 8 -1.600z" fill="#67b279"/><path d="M-3 0l2 2.200l4 -4.200" stroke="#fff" stroke-width="1.6" fill="none"/></g><g transform="translate(1195.3,23)"><path d="M-3.500 -8.400h7l4.900 4.900v7l-4.900 4.900h-7l-4.900 -4.900v-7z" fill="#e2080f"/><path d="M-3 3.500v-6.500h1.400v-2h1.400v-.8h1.400v.8h1.400v5l1.400 -1.500v3l-2.500 3.500h-3z" fill="#fff"/></g><g transform="translate(1231.3,23)"><rect x="-7.500" y="-4.500" width="15" height="11" rx="1.800" fill="#9a9a9a"/><rect x="-3" y="-6.500" width="6" height="3" fill="#9a9a9a"/><circle cx="0" cy="1" r="3.200" fill="#e6e6e6"/><circle cx="0" cy="1" r="1.600" fill="#9a9a9a"/></g><g transform="translate(1266.9,23)"><rect x="-8" y="-8" width="16" height="16" rx="4" fill="#e83cc4"/><path d="M-4 -8h8a4 4 0 0 1 4 4v3l-8 5z" fill="#f7a21a"/><path d="M8 -2v6a4 4 0 0 1 -4 4h-3l-1 -8z" fill="#3cc83c"/><path d="M3 8h-7a4 4 0 0 1 -3.500 -2l7.500 -6z" fill="#18a8f0"/><circle r="6" fill="#fff"/><circle r="4.700" fill="#23303e"/><circle r="2.400" fill="#3c5068"/></g><g transform="translate(1302.7,23)"><path d="M-8 -8h12l4 8l-4 8h-12z" fill="#3aa0e0"/><path d="M-5 4.500v-9h4.500M-5 0h3.500M2 -5h3M3.500 -5v10M2 5h3" stroke="#fff" stroke-width="1.600" fill="none"/></g><g transform="translate(1339.0,23)"><rect x="-8" y="-8" width="16" height="16" rx="1.500" fill="#fff"/><path d="M-6 -6h4.500v4.500h-4.500zM1.500 -6h4.500v4.500h-4.500zM-6 1.500h4.500v4.500h-4.500z" fill="none" stroke="#222" stroke-width="1.500"/><path d="M2 2h2v2h-2zM4.500 4.500h2v2h-2zM1.500 5h1.500v1.500h-1.500z" fill="#222"/></g><g transform="translate(1375.5,23)"><path d="M0 -8l8 4.500l-8 4.500l-8 -4.500z" fill="#3a12a8"/><path d="M-8 1l8 4.500l3 -1.700" fill="none" stroke="#3a12a8" stroke-width="2.500"/><rect x="-1.900" y=".600" width="15.800" height="12.800" rx="2.500" fill="#6a35c8"/></g><g transform="translate(1411.5,23)"><path d="M0 -8c3 0 5.500 .8 7 1.500c0 7.500 -2.500 11.500 -7 14.500c-4.500 -3 -7 -7 -7 -14.500c1.500 -.700 4 -1.500 7 -1.500z" fill="#b8bcc8"/><circle r="3.400" cy="-.5" fill="none" stroke="#7e8498" stroke-width="1.500"/></g><g transform="translate(1447.5,23)"><path d="M-8 0c2.500 -4.500 5.500 -6 8 -6s5.500 1.500 8 6c-2.500 4.500 -5.500 6 -8 6s-5.500 -1.500 -8 -6z" fill="none" stroke="#18b34a" stroke-width="1.800"/><path d="M-2 5l5 -10" stroke="#18b34a" stroke-width="2.400"/><circle r="2" fill="#18b34a"/></g><g transform="translate(1483.0,23)"><circle r="7.400" fill="none" stroke="#e3262d" stroke-width="1.700"/><path d="M-5.500 5.500l11 -11" stroke="#e3262d" stroke-width="1.700"/><path d="M-3 -3.500l6 3.500l-6 3.500z" fill="#e3262d" opacity=".75"/></g><g transform="translate(1519.0,23)"><rect x="-6.500" y="-7.500" width="8.500" height="14" rx="1.500" fill="#fff"/><rect x="-1.500" y="-5" width="8" height="13" rx="1.500" fill="#4a8df0"/></g><g transform="translate(1555.4,23)"><path d="M-7 8c1 -6 5 -13 13.500 -16c-1 7 -5 11.500 -10 12.500z" fill="#8b4fc8"/><path d="M-7 8l7 -9" stroke="#c9a4ec" stroke-width="1.200"/></g><g transform="translate(1591.0,23)"><circle r="7.600" fill="#c5352f"/><circle r="7.600" fill="none" stroke="#e0645c" stroke-width="1"/><rect x="-3" y="-2.500" width="6.500" height="4.500" rx=".8" fill="#f0d8d4"/></g><g transform="translate(1627.3,23)"><circle r="8" fill="#f26a3a"/><path d="M-3.500 -3.500h9M1.500 -3.500l-2.500 8" stroke="#fff" stroke-width="2.200" fill="none"/></g><g transform="translate(1662.6,23)"><circle r="7.600" fill="#c9c9c9"/><path d="M-7.500 0h15M0 -7.500v15M-6.500 -3.800h13M-6.500 3.800h13M-3.800 -6.500v13M3.800 -6.500v13" stroke="#777" stroke-width=".9"/></g><g transform="translate(1698.7,23)"><rect x="-8" y="-8" width="16" height="16" rx="2.500" fill="#1a5ce0"/><circle r="3.600" fill="none" stroke="#fff" stroke-width="1.800"/><path d="M0 -6.400v2M0 4.400v2M-6.400 0h2M4.400 0h2M-4.500 -4.500l1.400 1.400M3.100 3.100l1.400 1.400M-4.500 4.500l1.400 -1.400M3.100 -3.100l1.400 -1.400" stroke="#fff" stroke-width="1.600"/></g><g transform="translate(1734.5,23)"><path d="M-1 -7.500a7.500 7.500 0 1 0 0 15a9 9 0 0 1 0 -15z" fill="#a9a9a9"/><circle cx="2" r="5.200" fill="none" stroke="#a9a9a9" stroke-width="2.400" stroke-dasharray="2.800 1.600"/><path d="M2 -2.500v4M.3 0l1.700 2l1.700 -2" stroke="#a9a9a9" stroke-width="1.300" fill="none"/></g><g transform="translate(1771.0,23)"><rect x="-8" y="-8" width="16" height="16" rx="1.500" fill="#6d6d6d"/><path d="M-2 4v-8h4.500M-2 0h3.500" stroke="#fff" stroke-width="1.700" fill="none"/></g><g transform="translate(1807.5,23)"><path d="M-7 -4.500h4v-1.200a2 2 0 0 1 4 0v1.200h4.500v4.200h1a2 2 0 0 1 0 4h-1v4.300h-12.500v-4a2.200 2.200 0 0 0 0 -4.400z" fill="none" stroke="#e6dfb8" stroke-width="1.700" stroke-linejoin="round"/></g><rect x="1833.5" y="15" width="1.200" height="15.500" fill="#6f6a45"/><circle cx="1861.300" cy="22.600" r="10" fill="#6b7f56"/><path d="M1853.500 30.500c1 -4.500 4 -6 7.800 -6s6.800 1.500 7.800 6a10 10 0 0 1 -15.600 0z" fill="#d9c7c1"/><circle cx="1861.300" cy="19.600" r="3.300" fill="#c79a7e"/><path d="M1858 18.600a3.300 3.300 0 0 1 6.600 0c-1 -1 -5.600 -1 -6.600 0z" fill="#2a221c"/><circle cx="1897" cy="16.200" r="1.700" fill="#e6dfb8"/><circle cx="1897" cy="22.700" r="1.700" fill="#e6dfb8"/><circle cx="1897" cy="29.200" r="1.700" fill="#e6dfb8"/></svg>
<span class="t" id="t0" style="left:192.14px;top:13.00px;font-size:14px;font-weight:400;color:#e9e6d8;letter-spacing:0.032px;">oohla.mu</span>
<span class="t" id="t1" style="left:250.24px;top:13.00px;font-size:14px;font-weight:400;color:#c9c5b0;letter-spacing:0.045px;">/system/productservice</span>
<span class="t" id="t102" style="left:1375.54px;top:21.00px;font-size:9.5px;font-weight:700;color:#ffffff;letter-spacing:0.918px;">25</span>
</div>
</div></body></html>
